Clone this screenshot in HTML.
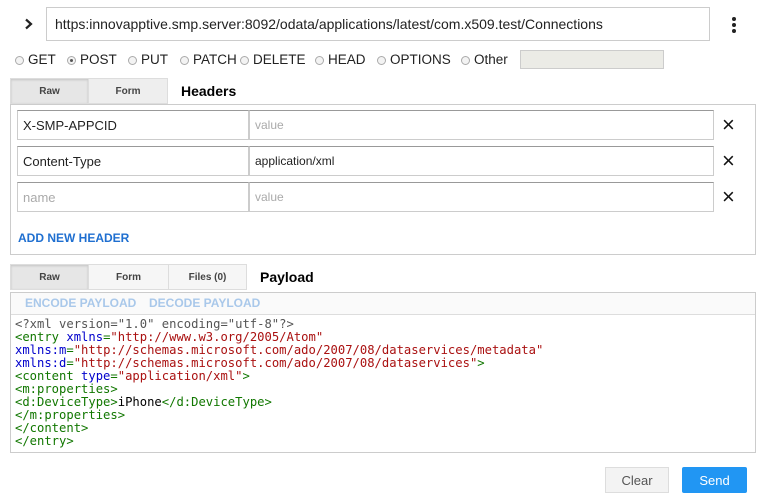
<!DOCTYPE html>
<html><head><style>
body{margin:0;width:763px;height:503px;background:#fff;font-family:"Liberation Sans",Arial,sans-serif;position:relative;overflow:hidden}
.a{position:absolute}
.inp{position:absolute;border:1px solid #ccc;border-top-color:#999;background:#fff;box-sizing:border-box;font-size:13px;padding-left:5px;display:flex;align-items:center;color:#222}
.ph{color:#aaa;font-size:12px}
.tab{position:absolute;box-sizing:border-box;border:1px solid #ddd;background:#f6f6f6;font-size:10px;font-weight:bold;color:#444;display:flex;align-items:center;justify-content:center}
.tab.on{background:#e6e6e6;box-shadow:inset 0 1px 2px rgba(0,0,0,.15)}
.r{display:inline-block;width:9px;height:9px;border:1px solid #aaa;border-radius:50%;background:#f3f3f3;margin-right:4px;vertical-align:-1px;position:relative;box-sizing:border-box}
.rad{position:absolute;top:52px;font-size:13.5px;color:#222;white-space:nowrap}
.x{position:absolute;font-size:22px;left:722px;line-height:20px;color:#111}
pre{margin:0;font-family:"DejaVu Sans Mono","Liberation Mono",monospace;font-size:12.2px;line-height:13px;color:#170}
.t{color:#170}.at{color:#00c}.s{color:#a11}.g{color:#555}
</style></head><body>
<svg class="a" style="left:24px;top:18px" width="9" height="12" viewBox="0 0 9 12"><path d="M2 1.5 L7 6 L2 10.5" fill="none" stroke="#222" stroke-width="2.2"/></svg>
<div class="inp" style="left:46px;top:7px;width:664px;height:34px;font-size:14px;padding-left:8px;border-color:#ccc">https:innovapptive.smp.server:8092/odata/applications/latest/com.x509.test/Connections</div>
<div class="a" style="left:732px;top:17px;width:4px">
<div style="width:4px;height:4px;background:#222;border-radius:50%;margin-bottom:2px"></div><div style="width:4px;height:4px;background:#222;border-radius:50%;margin-bottom:2px"></div><div style="width:4px;height:4px;background:#222;border-radius:50%"></div></div>
<div class="rad" style="left:15px"><span class="r"></span>GET</div>
<div class="rad" style="left:67px"><span class="r"><span style="position:absolute;left:2px;top:2px;width:3px;height:3px;border-radius:50%;background:#555"></span></span>POST</div>
<div class="rad" style="left:128px"><span class="r"></span>PUT</div>
<div class="rad" style="left:180px"><span class="r"></span>PATCH</div>
<div class="rad" style="left:240px"><span class="r"></span>DELETE</div>
<div class="rad" style="left:315px"><span class="r"></span>HEAD</div>
<div class="rad" style="left:377px"><span class="r"></span>OPTIONS</div>
<div class="rad" style="left:461px"><span class="r"></span>Other</div>
<div class="a" style="left:520px;top:50px;width:144px;height:19px;background:#ebebe6;border:1px solid #ccc;box-sizing:border-box"></div>
<div class="tab on" style="left:10px;top:78px;width:79px;height:26px">Raw</div>
<div class="tab" style="left:88px;top:78px;width:80px;height:26px;background:#eee">Form</div>
<div class="a" style="left:181px;top:83px;font-size:14px;font-weight:bold">Headers</div>
<div class="a" style="left:10px;top:104px;width:746px;height:151px;border:1px solid #ccc;box-sizing:border-box"></div>
<div class="inp" style="left:17px;top:110px;width:232px;height:30px">X-SMP-APPCID</div>
<div class="inp" style="left:249px;top:110px;width:465px;height:30px"><span class="ph">value</span></div>
<div class="x" style="top:115px">&#215;</div>
<div class="inp" style="left:17px;top:146px;width:232px;height:30px">Content-Type</div>
<div class="inp" style="left:249px;top:146px;width:465px;height:30px;font-size:12px">application/xml</div>
<div class="x" style="top:151px">&#215;</div>
<div class="inp" style="left:17px;top:182px;width:232px;height:30px"><span class="ph" style="font-size:13px">name</span></div>
<div class="inp" style="left:249px;top:182px;width:465px;height:30px"><span class="ph">value</span></div>
<div class="x" style="top:187px">&#215;</div>
<div class="a" style="left:18px;top:231px;font-size:12px;font-weight:bold;color:#1f6fd0">ADD NEW HEADER</div>
<div class="tab on" style="left:10px;top:264px;width:79px;height:26px">Raw</div>
<div class="tab" style="left:88px;top:264px;width:81px;height:26px">Form</div>
<div class="tab" style="left:168px;top:264px;width:79px;height:26px">Files (0)</div>
<div class="a" style="left:260px;top:269px;font-size:14px;font-weight:bold">Payload</div>
<div class="a" style="left:10px;top:292px;width:746px;height:161px;border:1px solid #ccc;box-sizing:border-box"></div>
<div class="a" style="left:11px;top:293px;width:744px;height:21px;background:#fafafa;border-bottom:1px solid #ddd"></div>
<div class="a" style="left:25px;top:296px;font-size:12px;font-weight:bold;color:#a9c8ea">ENCODE PAYLOAD</div>
<div class="a" style="left:149px;top:296px;font-size:12px;font-weight:bold;color:#a9c8ea">DECODE PAYLOAD</div>
<div class="a" style="left:15px;top:318px"><pre><span class="g">&lt;?xml version="1.0" encoding="utf-8"?&gt;</span>
&lt;entry <span class="at">xmlns</span>=<span class="s">"http://www.w3.org/2005/Atom"</span>
<span class="at">xmlns:m</span>=<span class="s">"http://schemas.microsoft.com/ado/2007/08/dataservices/metadata"</span>
<span class="at">xmlns:d</span>=<span class="s">"http://schemas.microsoft.com/ado/2007/08/dataservices"</span>&gt;
&lt;content <span class="at">type</span>=<span class="s">"application/xml"</span>&gt;
&lt;m:properties&gt;
&lt;d:DeviceType&gt;<span style="color:#000">iPhone</span>&lt;/d:DeviceType&gt;
&lt;/m:properties&gt;
&lt;/content&gt;
&lt;/entry&gt;</pre></div>
<div class="a" style="left:605px;top:467px;width:64px;height:26px;border:1px solid #ddd;background:#f3f3f3;box-sizing:border-box;font-size:13px;color:#555;display:flex;align-items:center;justify-content:center">Clear</div>
<div class="a" style="left:682px;top:467px;width:65px;height:26px;background:#2196f3;border-radius:2px;font-size:13px;color:#fff;display:flex;align-items:center;justify-content:center">Send</div>
</body></html>
